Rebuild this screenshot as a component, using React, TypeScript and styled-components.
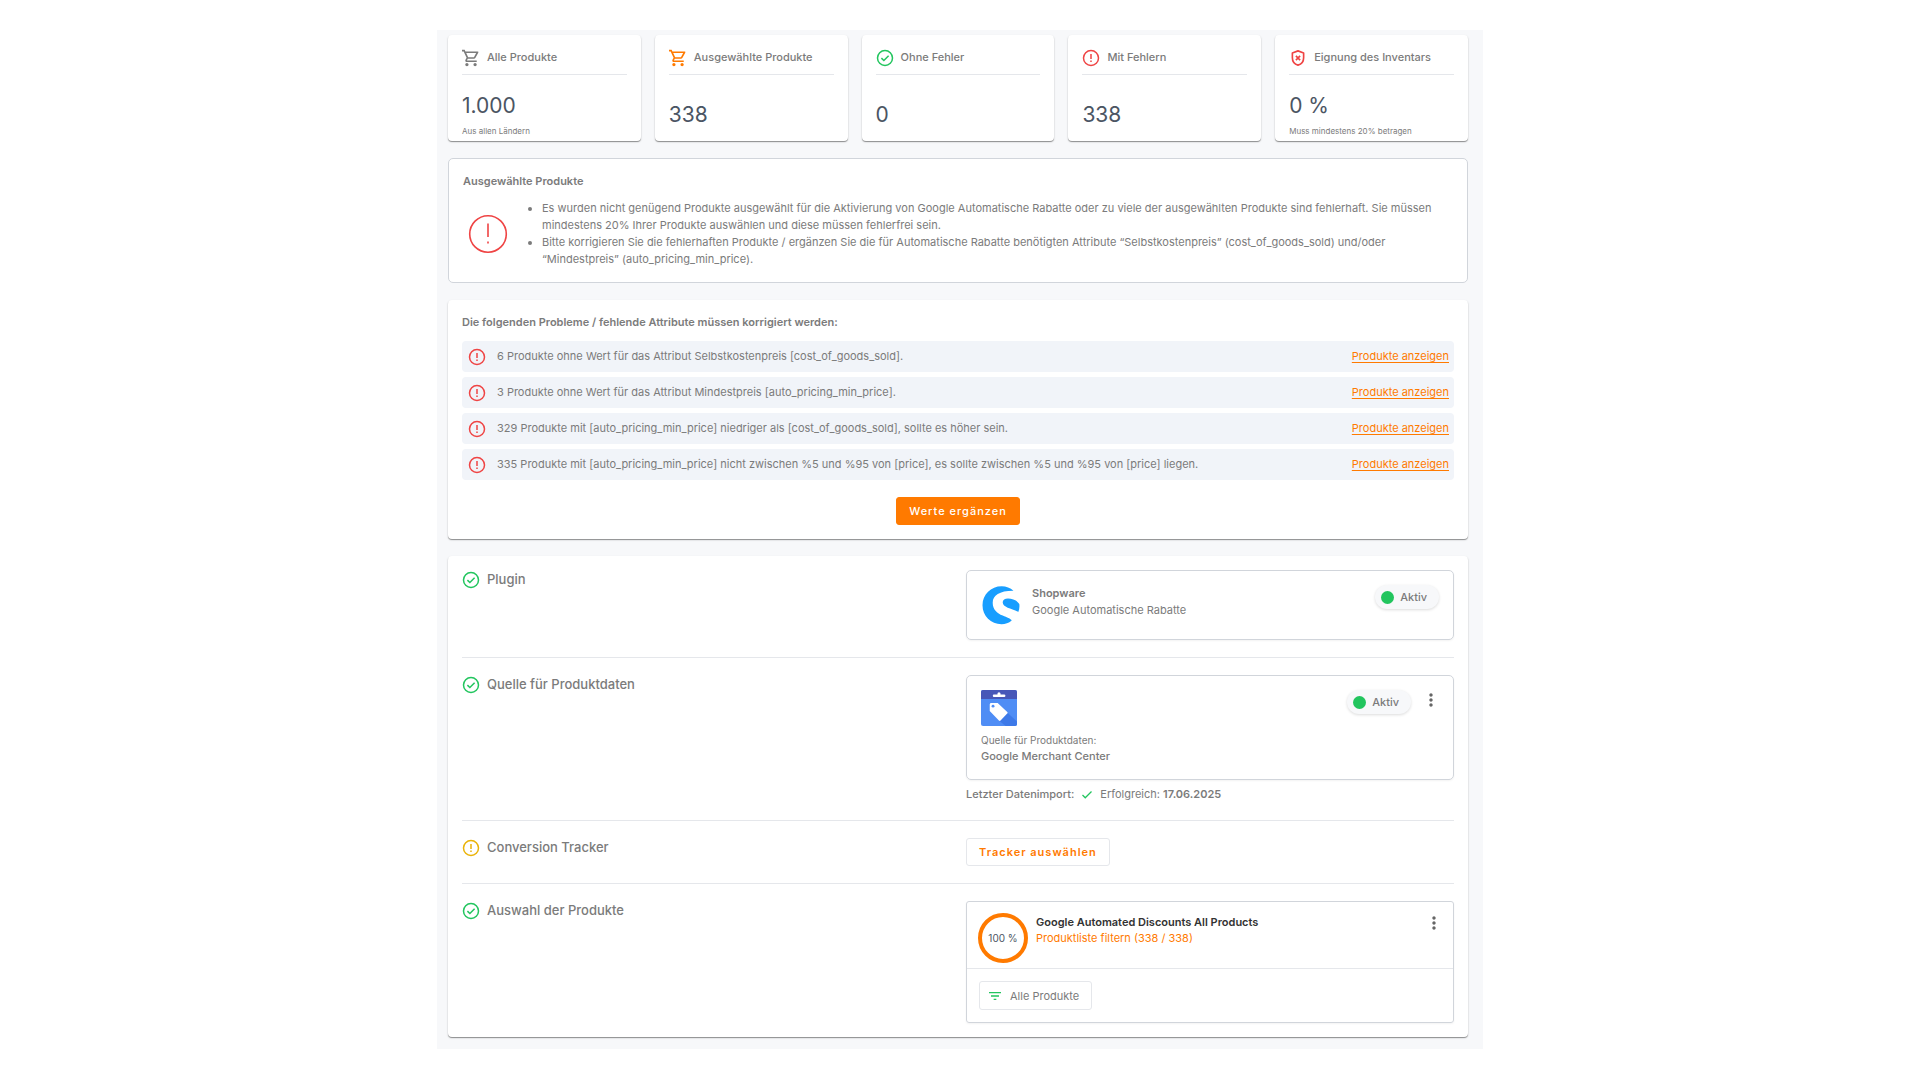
import React from "react";
import styled, { createGlobalStyle, css } from "styled-components";
import { MdFilterList, MdMoreVert, MdOutlineShoppingCart } from "react-icons/md";

const color = {
  text: "#7b7b7b",
  strong: "#4b5563",
  dark: "#333333",
  line: "#e5e7eb",
  border: "#d1d5db",
  orange: "#ff7a00",
  green: "#22c55e",
  red: "#ef4444",
  yellow: "#eab308",
  panel: "#f7f8fa",
  row: "#f1f4f9",
};

const GlobalStyle = createGlobalStyle`
  *, *::before, *::after { box-sizing: border-box; }
  body { margin: 0; background: #fff; }
  body, button { font-family: Inter, "Liberation Sans", sans-serif; }
  h2, h3, p, ul { margin: 0; padding: 0; }
  svg { flex: none; }
`;

const Page = styled.main`
  padding: 30px 16px;
  color: ${color.text};
  font-size: 11px;
  line-height: 17px;
`;

const Panel = styled.div`
  display: flex;
  flex-direction: column;
  gap: 17px;
  max-width: 1046px;
  margin: 0 auto;
  padding: 5px 15px 12px 11px;
  background: ${color.panel};
`;

const cardStyle = css`
  background: #fff;
  border-radius: 4px;
  box-shadow: 0 1px 1px rgba(0, 0, 0, 0.4), 0 1px 3px rgba(0, 0, 0, 0.08);
`;

const Stats = styled.section`
  display: grid;
  grid-template-columns: repeat(5, 1fr);
  gap: 14px;
`;

const StatCard = styled.article`
  ${cardStyle}
  display: flex;
  flex-direction: column;
  min-height: 106px;
  padding: 14px 14px 1px;
`;

const StatHead = styled.h3`
  display: flex;
  align-items: center;
  gap: 7px;
  height: 26px;
  padding-bottom: 8px;
  border-bottom: 1px solid ${color.line};
  font-size: 11px;
  font-weight: 500;
`;

const StatBody = styled.div`
  display: flex;
  flex: 1;
  flex-direction: column;
  justify-content: center;
  gap: 4px;
  padding-top: 15px;
`;

const StatValue = styled.strong`
  color: ${color.strong};
  font-size: 21px;
  font-weight: 400;
  line-height: 28px;
`;

const StatNote = styled.small`
  font-size: 8px;
  line-height: 15px;
`;

const Notice = styled.section`
  padding: 14px;
  background: #fff;
  border: 1px solid ${color.border};
  border-radius: 5px;
`;

const Heading = styled.h2`
  font-size: 11px;
  font-weight: 600;
  line-height: 16px;
`;

const NoticeBody = styled.div`
  display: flex;
  align-items: center;
  gap: 14px;
  margin-top: 11px;
  padding-left: 5px;
`;

const NoticeList = styled.ul`
  flex: 1;
  padding-left: 20px;
`;

const Problems = styled.section`
  ${cardStyle}
  padding: 14px;
`;

const ProblemList = styled.ul`
  display: flex;
  flex-direction: column;
  gap: 5px;
  margin: 11px 0 17px;
  list-style: none;
`;

const Problem = styled.li`
  display: flex;
  align-items: center;
  gap: 11px;
  min-height: 31px;
  padding: 0 5px 0 6px;
  background: ${color.row};
  border-radius: 4px;
`;

const ShowLink = styled.a`
  margin-left: auto;
  color: ${color.orange};
  text-decoration: underline;
  text-underline-offset: 2px;
`;

const Button = styled.button<{ $filled?: boolean }>`
  display: block;
  height: 28px;
  padding: 0 12px;
  background: ${(p) => (p.$filled ? color.orange : "#fff")};
  border: 1px solid ${(p) => (p.$filled ? color.orange : color.line)};
  border-radius: 3px;
  color: ${(p) => (p.$filled ? "#fff" : color.orange)};
  font-size: 11px;
  font-weight: ${(p) => (p.$filled ? 500 : 600)};
  letter-spacing: 1px;
  cursor: pointer;
`;

const Actions = styled.div`
  display: flex;
  justify-content: center;
`;

const Setup = styled.section`
  ${cardStyle}
  padding: 0 14px;
`;

const SetupRow = styled.div`
  display: grid;
  grid-template-columns: 504px 1fr;
  padding: 17px 0;

  &:first-child { padding-top: 14px; }
  &:last-child { padding-bottom: 14px; }
  & + & { border-top: 1px solid ${color.line}; }
`;

const SetupTitle = styled.h2`
  display: flex;
  align-items: center;
  gap: 7px;
  height: 19px;
  font-size: 13px;
  font-weight: 500;
`;

const Box = styled.div`
  border: 1px solid ${color.border};
  border-radius: 5px;
  box-shadow: 0 1px 2px rgba(0, 0, 0, 0.05);
`;

const PluginBox = styled(Box)`
  display: flex;
  align-items: flex-start;
  gap: 12px;
  min-height: 70px;
  padding: 14px 14px 14px 15px;
`;

const PluginText = styled.div`
  flex: 1;
`;

const Strong = styled.p`
  font-weight: 600;
`;

const Status = styled.span`
  display: flex;
  align-items: center;
  gap: 6px;
  height: 24px;
  padding: 0 12px 0 6px;
  background: ${color.panel};
  border-radius: 12px;
  box-shadow: 0 1px 3px rgba(0, 0, 0, 0.14);
  font-weight: 500;

  &::before {
    width: 13px;
    height: 13px;
    background: ${color.green};
    border-radius: 50%;
    content: "";
  }
`;

const SourceBox = styled(Box)`
  padding: 14px 12px 14px 14px;
`;

const SourceTop = styled.div`
  display: flex;
  align-items: flex-start;
  gap: 10px;
  margin-bottom: 7px;
`;

const Spacer = styled.span`
  flex: 1;
`;

const MenuButton = styled.button`
  display: flex;
  padding: 0;
  background: none;
  border: 0;
  color: #666;
  cursor: pointer;
`;

const Caption = styled.p`
  font-size: 10px;
  line-height: 15px;
`;

const Medium = styled.p`
  font-weight: 500;
`;

const Import = styled.p`
  display: flex;
  align-items: center;
  gap: 7px;
  margin-top: 6px;
`;

const SelectionBox = styled(Box)`
  border-radius: 3px;
`;

const SelectionTop = styled.div`
  display: flex;
  align-items: flex-start;
  gap: 8px;
  min-height: 67px;
  padding: 11px 9px 4px 11px;
  border-bottom: 1px solid ${color.line};
`;

const Ring = styled.div`
  display: flex;
  align-items: center;
  justify-content: center;
  width: 50px;
  height: 50px;
  border: 4px solid ${color.orange};
  border-radius: 50%;
  color: ${color.strong};
  font-size: 10px;
`;

const SelectionText = styled.div`
  flex: 1;
  padding-top: 1px;
  line-height: 16px;
`;

const SelectionName = styled.p`
  color: ${color.dark};
  font-weight: 600;
`;

const FilterLink = styled.a`
  color: ${color.orange};
  text-decoration: none;
`;

const SelectionBottom = styled.div`
  padding: 12px;
`;

const Chip = styled.button`
  display: flex;
  align-items: center;
  gap: 7px;
  height: 29px;
  padding: 0 12px 0 7px;
  background: #fff;
  border: 1px solid ${color.line};
  border-radius: 3px;
  color: ${color.text};
  font-size: 11px;
  cursor: pointer;

  svg { color: ${color.green}; }
`;

type IconProps = { size?: number; tone?: string };

function CheckCircle({ size = 18 }: IconProps) {
  return (
    <svg width={size} height={size} viewBox="0 0 24 24" fill="none" stroke={color.green} strokeWidth="2" aria-hidden="true">
      <circle cx="12" cy="12" r="10" />
      <path d="M7.200 12.200l3.300 3.200 6.300-6.300" />
    </svg>
  );
}

function AlertCircle({ size = 18, tone = color.red }: IconProps) {
  return (
    <svg width={size} height={size} viewBox="0 0 24 24" fill="none" stroke={tone} strokeWidth="2" aria-hidden="true">
      <circle cx="12" cy="12" r="10" />
      <path d="M12 6.700v6.600M12 15.300v2" />
    </svg>
  );
}

function Cart({ tone }: IconProps) {
  return <MdOutlineShoppingCart size={18} viewBox="1 1 22 22" color={tone} aria-hidden="true" />;
}

function LargeAlert() {
  return (
    <svg width="40" height="40" viewBox="0 0 40 40" fill="none" stroke={color.red} strokeWidth="1.600" aria-hidden="true">
      <circle cx="20" cy="20" r="18.300" />
      <path d="M20 9.500v13.500M20 27.500v2" />
    </svg>
  );
}

function ShieldX() {
  return (
    <svg width="18" height="18" viewBox="0 0 24 24" fill="none" stroke={color.red} strokeWidth="2.200" aria-hidden="true">
      <path d="M12 2.500l-7.500 2.800v6.200c0 5 3 8.700 7.500 10 4.500-1.300 7.500-5 7.500-10V5.300z" strokeLinejoin="round" />
      <path d="M9.200 9.200l5.600 5.600M14.800 9.200l-5.600 5.600" />
    </svg>
  );
}

function ShopwareLogo() {
  return (
    <svg width="38" height="40" viewBox="0 0 38 40" fill="#189eff" aria-hidden="true">
      <path d="M31.500 5.800C28.300 3 24.200 1.300 19.700 1.300 9 1.300.5 9.500.5 20.200.5 30.900 8.900 39.200 19.500 39.200c3.800 0 7.300-1.200 10.200-3.700-.9-1.700-4.700-3-9-4.900C15 28.200 10.700 24.500 10.700 17.700 10.700 10.500 17.500 5.700 31.500 5.800z" />
      <path d="M37.300 19c-2.800-4.200-7.100-5.600-11.300-5.600-3.200 0-5.300 1.700-5.300 3.900 0 5.300 8.500 6 15.600 9.600 1-2.500 1.400-5.100 1-7.900z" />
    </svg>
  );
}

function MerchantLogo() {
  return (
    <svg width="36" height="36" viewBox="0 0 35 36" preserveAspectRatio="none" aria-hidden="true">
      <rect width="35" height="36" rx="2" fill="#4f8df5" />
      <path d="M25.500 22.500L35 31.500V34a2 2 0 0 1-2 2H24l-6-5z" fill="#3d79e8" />
      <path d="M2 0h31a2 2 0 0 1 2 2v7H0V2a2 2 0 0 1 2-2z" fill="#4757b8" />
      <path d="M11.500 5.500a1 1 0 0 1 1-1H16V3.700a1.500 1.500 0 0 1 3 0v.8h3.500a1 1 0 0 1 0 2.500h-10a1 1 0 0 1-1-1z" fill="#fff" />
      <path d="M10 13h6.200l9.300 9c.6.600.6 1 0 1.600l-6.500 7c-.5.600-1 .6-1.600 0L8.500 21v-6.500c0-.9.600-1.500 1.500-1.500z" fill="#fff" />
      <circle cx="11.700" cy="16.200" r="1.400" fill="#4f8df5" />
    </svg>
  );
}

function Tick() {
  return (
    <svg width="12" height="12" viewBox="0 0 24 24" fill="none" stroke={color.green} strokeWidth="2.500" aria-hidden="true">
      <path d="M3 12l5.500 5.500L21 5" />
    </svg>
  );
}

const stats = [
  { label: "Alle Produkte", value: "1.000", note: "Aus allen Ländern", icon: <Cart /> },
  { label: "Ausgewählte Produkte", value: "338", icon: <Cart tone={color.orange} /> },
  { label: "Ohne Fehler", value: "0", icon: <CheckCircle /> },
  { label: "Mit Fehlern", value: "338", icon: <AlertCircle /> },
  { label: "Eignung des Inventars", value: "0 %", note: "Muss mindestens 20% betragen", icon: <ShieldX /> },
];

const problems = [
  "6 Produkte ohne Wert für das Attribut Selbstkostenpreis [cost_of_goods_sold].",
  "3 Produkte ohne Wert für das Attribut Mindestpreis [auto_pricing_min_price].",
  "329 Produkte mit [auto_pricing_min_price] niedriger als [cost_of_goods_sold], sollte es höher sein.",
  "335 Produkte mit [auto_pricing_min_price] nicht zwischen %5 und %95 von [price], es sollte zwischen %5 und %95 von [price] liegen.",
];

export default function App() {
  return (
    <Page lang="de">
      <GlobalStyle />
      <Panel>
        <Stats>
          {stats.map((s) => (
            <StatCard key={s.label}>
              <StatHead>{s.icon}{s.label}</StatHead>
              <StatBody>
                <StatValue>{s.value}</StatValue>
                {s.note && <StatNote>{s.note}</StatNote>}
              </StatBody>
            </StatCard>
          ))}
        </Stats>

        <Notice>
          <Heading>Ausgewählte Produkte</Heading>
          <NoticeBody>
            <LargeAlert />
            <NoticeList>
              <li>Es wurden nicht genügend Produkte ausgewählt für die Aktivierung von Google Automatische Rabatte oder zu viele der ausgewählten Produkte sind fehlerhaft. Sie müssen mindestens 20% Ihrer Produkte auswählen und diese müssen fehlerfrei sein.</li>
              <li>Bitte korrigieren Sie die fehlerhaften Produkte / ergänzen Sie die für Automatische Rabatte benötigten Attribute “Selbstkostenpreis” (cost_of_goods_sold) und/oder “Mindestpreis” (auto_pricing_min_price).</li>
            </NoticeList>
          </NoticeBody>
        </Notice>

        <Problems>
          <Heading>Die folgenden Probleme / fehlende Attribute müssen korrigiert werden:</Heading>
          <ProblemList>
            {problems.map((text) => (
              <Problem key={text}>
                <AlertCircle />
                <span>{text}</span>
                <ShowLink href="#produkte">Produkte anzeigen</ShowLink>
              </Problem>
            ))}
          </ProblemList>
          <Actions>
            <Button type="button" $filled>Werte ergänzen</Button>
          </Actions>
        </Problems>

        <Setup>
          <SetupRow>
            <SetupTitle><CheckCircle />Plugin</SetupTitle>
            <PluginBox>
              <ShopwareLogo />
              <PluginText>
                <Strong>Shopware</Strong>
                <p>Google Automatische Rabatte</p>
              </PluginText>
              <Status>Aktiv</Status>
            </PluginBox>
          </SetupRow>
          <SetupRow>
            <SetupTitle><CheckCircle />Quelle für Produktdaten</SetupTitle>
            <div>
              <SourceBox>
                <SourceTop>
                  <MerchantLogo />
                  <Spacer />
                  <Status>Aktiv</Status>
                  <MenuButton type="button" aria-label="Menü"><MdMoreVert size={20} /></MenuButton>
                </SourceTop>
                <Caption>Quelle für Produktdaten:</Caption>
                <Medium>Google Merchant Center</Medium>
              </SourceBox>
              <Import>
                <Medium as="span">Letzter Datenimport:</Medium>
                <Tick />
                <span>Erfolgreich: <Strong as="b">17.06.2025</Strong></span>
              </Import>
            </div>
          </SetupRow>
          <SetupRow>
            <SetupTitle><AlertCircle tone={color.yellow} />Conversion Tracker</SetupTitle>
            <div>
              <Button type="button">Tracker auswählen</Button>
            </div>
          </SetupRow>
          <SetupRow>
            <SetupTitle><CheckCircle />Auswahl der Produkte</SetupTitle>
            <SelectionBox>
              <SelectionTop>
                <Ring>100 %</Ring>
                <SelectionText>
                  <SelectionName>Google Automated Discounts All Products</SelectionName>
                  <FilterLink href="#filter">Produktliste filtern (338 / 338)</FilterLink>
                </SelectionText>
                <MenuButton type="button" aria-label="Menü"><MdMoreVert size={20} /></MenuButton>
              </SelectionTop>
              <SelectionBottom>
                <Chip type="button"><MdFilterList size={16} />Alle Produkte</Chip>
              </SelectionBottom>
            </SelectionBox>
          </SetupRow>
        </Setup>
      </Panel>
    </Page>
  );
}
